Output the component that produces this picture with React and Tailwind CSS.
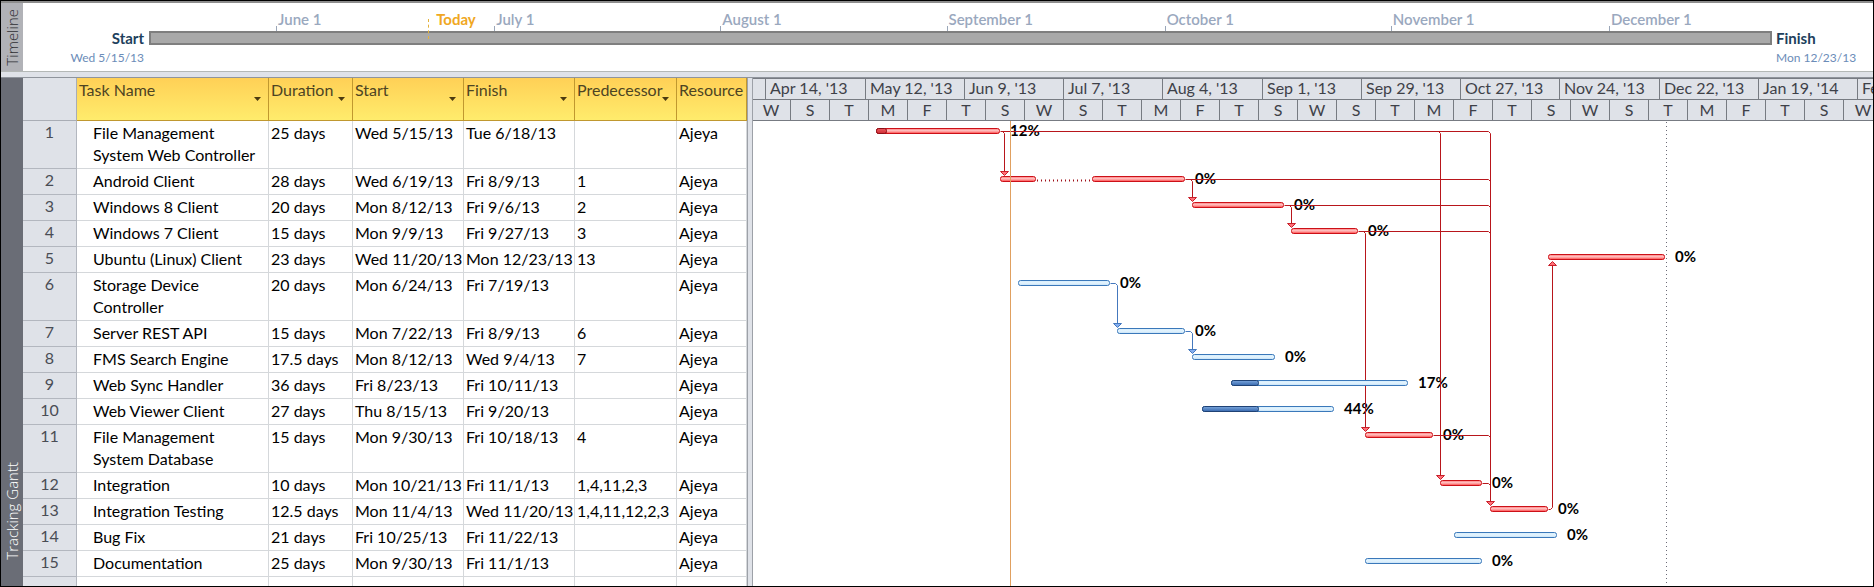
const HEADERS = [
  { label: 'Task Name', menu: true },
  { label: 'Duration', menu: true },
  { label: 'Start', menu: true },
  { label: 'Finish', menu: true },
  { label: 'Predecessor', menu: true },
  { label: 'Resource', menu: false },
];

// bars hold [start, end] chart x positions; mark is the end of the completed part
const TASKS = [
  { name: 'File Management System Web Controller', duration: '25 days', start: 'Wed 5/15/13', finish: 'Tue 6/18/13', pred: '', tall: true, critical: true, bars: [[123, 247]], mark: 134, pct: '12%' },
  { name: 'Android Client', duration: '28 days', start: 'Wed 6/19/13', finish: 'Fri 8/9/13', pred: '1', critical: true, bars: [[247, 283], [339, 432]], pct: '0%' },
  { name: 'Windows 8 Client', duration: '20 days', start: 'Mon 8/12/13', finish: 'Fri 9/6/13', pred: '2', critical: true, bars: [[439, 531]], pct: '0%' },
  { name: 'Windows 7 Client', duration: '15 days', start: 'Mon 9/9/13', finish: 'Fri 9/27/13', pred: '3', critical: true, bars: [[538, 605]], pct: '0%' },
  { name: 'Ubuntu (Linux) Client', duration: '23 days', start: 'Wed 11/20/13', finish: 'Mon 12/23/13', pred: '13', critical: true, bars: [[795, 912]], pct: '0%' },
  { name: 'Storage Device Controller', duration: '20 days', start: 'Mon 6/24/13', finish: 'Fri 7/19/13', pred: '', tall: true, bars: [[265, 357]], pct: '0%' },
  { name: 'Server REST API', duration: '15 days', start: 'Mon 7/22/13', finish: 'Fri 8/9/13', pred: '6', bars: [[364, 432]], pct: '0%' },
  { name: 'FMS Search Engine', duration: '17.5 days', start: 'Mon 8/12/13', finish: 'Wed 9/4/13', pred: '7', bars: [[439, 522]], pct: '0%' },
  { name: 'Web Sync Handler', duration: '36 days', start: 'Fri 8/23/13', finish: 'Fri 10/11/13', pred: '', bars: [[478, 655]], mark: 506, pct: '17%' },
  { name: 'Web Viewer Client', duration: '27 days', start: 'Thu 8/15/13', finish: 'Fri 9/20/13', pred: '', bars: [[449, 581]], mark: 506, pct: '44%' },
  { name: 'File Management System Database', duration: '15 days', start: 'Mon 9/30/13', finish: 'Fri 10/18/13', pred: '4', tall: true, critical: true, bars: [[612, 680]], pct: '0%' },
  { name: 'Integration', duration: '10 days', start: 'Mon 10/21/13', finish: 'Fri 11/1/13', pred: '1,4,11,2,3', critical: true, bars: [[687, 729]], pct: '0%' },
  { name: 'Integration Testing', duration: '12.5 days', start: 'Mon 11/4/13', finish: 'Wed 11/20/13', pred: '1,4,11,12,2,3', critical: true, bars: [[737, 795]], pct: '0%' },
  { name: 'Bug Fix', duration: '21 days', start: 'Fri 10/25/13', finish: 'Fri 11/22/13', pred: '', bars: [[701, 804]], pct: '0%' },
  { name: 'Documentation', duration: '25 days', start: 'Mon 9/30/13', finish: 'Fri 11/1/13', pred: '', bars: [[612, 729]], pct: '0%' },
];

const ROW_TOPS = TASKS.reduce(
  (tops, t) => [...tops, tops[tops.length - 1] + (t.tall ? 48 : 26)],
  [0],
);

const MONTHS = [
  { label: 'June 1', span: 218 },
  { label: 'July 1', span: 226 },
  { label: 'August 1', span: 226 },
  { label: 'September 1', span: 218 },
  { label: 'October 1', span: 226 },
  { label: 'November 1', span: 218 },
  { label: 'December 1', span: 163 },
];

const PERIODS = ["Apr 14, '13", "May 12, '13", "Jun 9, '13", "Jul 7, '13", "Aug 4, '13", "Sep 1, '13", "Sep 29, '13", "Oct 27, '13", "Nov 24, '13", "Dec 22, '13", "Jan 19, '14", "Feb 16, '14"];

// one tick every 11 days, so the weekday initials repeat after seven ticks
const DAYS = Array.from({ length: 29 }, (_, i) => 'WSTMFTS'[i % 7]);

// y of the middle of the bar in a row (1-based row number)
const mid = (row) => ROW_TOPS[row - 1] + 10;

const ARROWS = [
  { x: 251, row: 2 }, { x: 439, row: 3 }, { x: 538, row: 4 }, { x: 612, row: 11 },
  { x: 687, row: 12 }, { x: 737, row: 13 },
  { x: 364, row: 7, blue: true }, { x: 439, row: 8, blue: true },
];

const RED_LINKS = [
  `M247 ${mid(1)}H735L737 ${mid(1) + 2}V${mid(13) - 6}`,
  `M249 ${mid(1)}L251 ${mid(1) + 2}V${mid(2) - 6}`,
  `M685 ${mid(1)}L687 ${mid(1) + 2}V${mid(12) - 6}`,
  `M432 ${mid(2)}H735L737 ${mid(2) + 2}`,
  `M437 ${mid(2)}L439 ${mid(2) + 2}V${mid(3) - 6}`,
  `M531 ${mid(3)}H735L737 ${mid(3) + 2}`,
  `M536 ${mid(3)}L538 ${mid(3) + 2}V${mid(4) - 6}`,
  `M605 ${mid(4)}H735L737 ${mid(4) + 2}`,
  `M610 ${mid(4)}L612 ${mid(4) + 2}V${mid(11) - 6}`,
  `M680 ${mid(11)}H735L737 ${mid(11) + 2}`,
  `M729 ${mid(12)}H735L737 ${mid(12) + 2}`,
  `M795 ${mid(13)}H797L799 ${mid(13) - 2}V${mid(5) + 6}`,
];

const BLUE_LINKS = [
  `M357 ${mid(6)}H362L364 ${mid(6) + 2}V${mid(7) - 6}`,
  `M432 ${mid(7)}H437L439 ${mid(7) + 2}V${mid(8) - 6}`,
];

function Timeline() {
  return (
    <section className="flex h-[69px] border-b border-[#b4b8b6] bg-white">
      <h2 className="flex w-[22px] shrink-0 items-center justify-center bg-[#b1b2b7] font-['Open_Sans',sans-serif] text-[15px] leading-[22px] font-light text-[#2f2f34]">
        <span className="rotate-180 [writing-mode:vertical-rl]">Timeline</span>
      </h2>
      <div className="flex w-[126px] shrink-0 flex-col items-end pt-[25px] pr-[5px]">
        <span className="text-[15px] leading-5 font-bold text-[#203f5c]">Start</span>
        <span className="text-xs leading-5 text-[#6b8cb8]">Wed 5/15/13</span>
      </div>
      <div className="relative min-w-0 flex-1 pt-[6px]">
        <div className="flex h-[22px] items-end">
          <div className="min-w-0 basis-0" style={{ flexGrow: 127 }} />
          {MONTHS.map((m) => (
            <div key={m.label} className="flex h-full min-w-0 basis-0 items-end" style={{ flexGrow: m.span }}>
              <span className="h-[5px] w-px bg-[#9aa6b8]" />
              <span className="self-start pl-px text-[15px] leading-5 font-semibold whitespace-nowrap text-[#9aa8be]">{m.label}</span>
            </div>
          ))}
        </div>
        <div className="h-[14px] border-2 border-[#7f7f7f] bg-[#a9a9a9]" />
        <div className="absolute top-[6px] left-[17.2%] flex text-[15px] leading-5 font-bold text-[#f0a722]">
          <span className="mt-[10px] h-5 border-l border-dashed border-[#e3b23c]" />
          <span className="pl-[7px]">Today</span>
        </div>
      </div>
      <div className="flex w-[101px] shrink-0 flex-col pt-[25px] pl-1">
        <span className="text-[15px] leading-5 font-bold text-[#203f5c]">Finish</span>
        <span className="text-xs leading-5 text-[#6b8cb8]">Mon 12/23/13</span>
      </div>
    </section>
  );
}

function TaskTable() {
  const cell = 'overflow-hidden border-r border-b border-[#d5d8db] pl-[2px] pt-[1px] whitespace-nowrap align-top';
  return (
    <table className="w-[724px] shrink-0 table-fixed border-separate border-spacing-0 bg-white text-left text-[16px] leading-[22px] text-black">
      <colgroup>
        <col className="w-[54px]" />
        <col className="w-[192px]" />
        <col className="w-[84px]" />
        <col className="w-[111px]" />
        <col className="w-[111px]" />
        <col className="w-[102px]" />
        <col className="w-[70px]" />
      </colgroup>
      <thead>
        <tr className="h-[43px]">
          <td className="border-r border-b border-[#a9adb5] bg-[#dfe2e8]" />
          {HEADERS.map((h) => (
            <th key={h.label} scope="col" className="border-r border-b border-[#c0982f] bg-linear-to-b from-[#ffd056] to-[#ffec6c] pt-[1px] pl-[2px] align-top font-normal text-[#4d4423]">
              <div className="flex items-start">
                <span className="min-w-0 flex-1 whitespace-nowrap">{h.label}</span>
                {h.menu && (
                  <button type="button" aria-label={`${h.label} menu`} className="mt-[18px] mr-[7px] shrink-0">
                    <svg width="7" height="4" viewBox="0 0 7 4" className="block">
                      <path d="M0 0h7L3.500 4z" fill="#4b3a10" />
                    </svg>
                  </button>
                )}
              </div>
            </th>
          ))}
        </tr>
      </thead>
      <tbody>
        {TASKS.map((t, i) => (
          <tr key={t.name} className={t.tall ? 'h-[48px]' : 'h-[26px]'}>
            <th scope="row" className="border-r border-b border-[#b3b7bf] bg-[#dfe2e8] text-center align-top font-normal text-[#4a4d55]">{i + 1}</th>
            <td className="border-r border-b border-[#d5d8db] pt-[1px] pr-[2px] pl-[16px] align-top">{t.name}</td>
            <td className={cell}>{t.duration}</td>
            <td className={cell}>{t.start}</td>
            <td className={cell}>{t.finish}</td>
            <td className={cell}>{t.pred}</td>
            <td className={cell}>Ajeya</td>
          </tr>
        ))}
        <tr className="h-[9px]">
          <td className="border-r border-[#b3b7bf] bg-[#dfe2e8]" />
          {HEADERS.map((h) => (
            <td key={h.label} className="border-r border-[#d5d8db]" />
          ))}
        </tr>
      </tbody>
    </table>
  );
}

function Bar({ x1, x2, y, fill, stroke }) {
  return <rect x={x1 + 0.5} y={y - 2.5} width={x2 - x1 - 1} height="5" rx="2" fill={fill} stroke={stroke} />;
}

function GanttChart() {
  return (
    <section className="min-w-0 flex-1 overflow-hidden bg-white">
      <div className="border-y border-[#777b82] bg-[#dfe2e8] text-[16px] text-[#3e4148]">
        <div className="flex h-[21px] border-b border-[#777b82] leading-[18px]">
          <div className="w-[13px] shrink-0 border-r border-[#777b82]" />
          {PERIODS.map((p, i) => (
            <div key={p} className={`${i % 4 === 0 ? 'w-[100px]' : 'w-[99px]'} shrink-0 border-r border-[#777b82] pl-1 whitespace-nowrap`}>{p}</div>
          ))}
        </div>
        <div className="-ml-px flex h-5 leading-[19px]">
          {DAYS.map((d, i) => (
            <div key={i} className="w-[39px] shrink-0 border-r border-[#777b82] text-center">{d}</div>
          ))}
        </div>
      </div>
      <svg width="1120" height="465" viewBox="0 0 1120 465" className="block" role="img" aria-label="Gantt chart">
        <defs>
          <linearGradient id="crit" x1="0" y1="0" x2="0" y2="1">
            <stop offset="0.1" stopColor="#ff8a8a" />
            <stop offset="0.45" stopColor="#ffc4c4" />
            <stop offset="1" stopColor="#ff4040" />
          </linearGradient>
          <linearGradient id="critDone" x1="0" y1="0" x2="0" y2="1">
            <stop offset="0" stopColor="#ea5a60" />
            <stop offset="1" stopColor="#cf2b33" />
          </linearGradient>
          <linearGradient id="norm" x1="0" y1="0" x2="0" y2="1">
            <stop offset="0" stopColor="#d4ecfb" />
            <stop offset="0.5" stopColor="#e4f4fe" />
            <stop offset="1" stopColor="#c3e0f6" />
          </linearGradient>
          <linearGradient id="normDone" x1="0" y1="0" x2="0" y2="1">
            <stop offset="0" stopColor="#7ba6dc" />
            <stop offset="1" stopColor="#3768ae" />
          </linearGradient>
        </defs>
        {TASKS.map((t, i) => (
          <text key={t.name} x={t.bars[t.bars.length - 1][1] + 10} y={mid(i + 1) + 5} fontSize="15" fontWeight="700" fill="#000">{t.pct}</text>
        ))}
        <path d="M913.500 1V465" stroke="#6b6b78" strokeDasharray="1 3" fill="none" />
        <g transform="translate(0.5 0.5)" fill="none">
          {RED_LINKS.map((d) => <path key={d} d={d} stroke="#b8161b" />)}
          {BLUE_LINKS.map((d) => <path key={d} d={d} stroke="#4478bd" />)}
        </g>
        {TASKS.map((t, i) => (
          <g key={t.name}>
            {t.bars.map(([a, b]) => (
              <Bar key={a} x1={a} x2={b} y={mid(i + 1)} fill={t.critical ? 'url(#crit)' : 'url(#norm)'} stroke={t.critical ? '#cc1018' : '#3a78ba'} />
            ))}
            {t.mark && (
              <Bar x1={t.bars[0][0]} x2={t.mark} y={mid(i + 1)} fill={t.critical ? 'url(#critDone)' : 'url(#normDone)'} stroke={t.critical ? '#8c0f16' : '#1f4275'} />
            )}
          </g>
        ))}
        <path d={`M284 ${mid(2) + 1.5}H339`} stroke="#a01018" strokeWidth="2" strokeDasharray="1 3" />
        {ARROWS.map((a) => (
          <path key={`${a.x}-${a.row}`} d={`M${a.x - 3.5} ${mid(a.row) - 7.5}h8l-4 4z`} fill={a.blue ? '#84aef0' : '#ff7078'} stroke={a.blue ? '#4478bd' : '#c8202a'} />
        ))}
        <path d={`M795.500 ${mid(5) + 8.5}h8l-4 -4z`} fill="#ff7078" stroke="#c8202a" />
        <path d="M257.500 0V465" stroke="#e0a060" />
      </svg>
    </section>
  );
}

export default function App() {
  return (
    <main className="border border-black bg-[#dfe2e8] font-['Lato',sans-serif]">
      <div className="border-t-2 border-[#8d8d8d]">
        <Timeline />
      </div>
      <div className="mt-[5px] flex border-t border-[#8f949c]">
        <h2 className="flex w-[22px] shrink-0 items-end justify-center bg-[#6a6d76] pb-[26px] font-['Open_Sans',sans-serif] text-[15px] leading-[22px] text-white">
          <span className="rotate-180 font-light [writing-mode:vertical-rl]">Tracking Gantt</span>
        </h2>
        <TaskTable />
        <div className="w-[6px] shrink-0 border-x border-[#9da1a8] bg-[#dfe2e8]" />
        <GanttChart />
      </div>
    </main>
  );
}
